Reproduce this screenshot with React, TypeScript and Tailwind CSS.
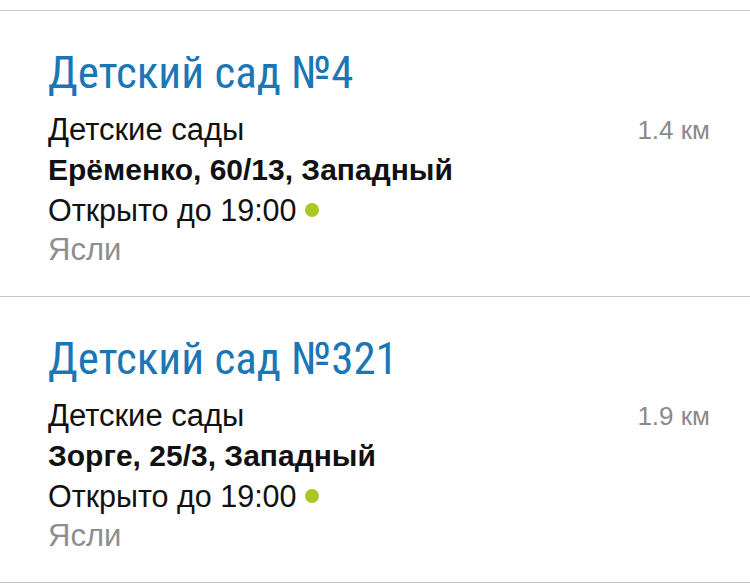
interface Place {
  id: number
  title: string
  category: string
  address: string
  hours: string
  tag: string
  distance: string
}

const places: Place[] = [
  {
    id: 4,
    title: 'Детский сад №4',
    category: 'Детские сады',
    address: 'Ерёменко, 60/13, Западный',
    hours: 'Открыто до 19:00',
    tag: 'Ясли',
    distance: '1.4 км',
  },
  {
    id: 321,
    title: 'Детский сад №321',
    category: 'Детские сады',
    address: 'Зорге, 25/3, Западный',
    hours: 'Открыто до 19:00',
    tag: 'Ясли',
    distance: '1.9 км',
  },
]

function PlaceCard({ place }: { place: Place }) {
  return (
    <li className="border-t border-[#c8c8c8] pl-[48px] pr-[40px] pt-[36px] pb-[26px]">
      {/* Title */}
      <h2 className="font-['Roboto_Condensed','DejaVu_Sans_Condensed',sans-serif] text-[45px] leading-[52px] text-[#1b76b6] mb-[11px]">
        {place.title}
      </h2>

      {/* Details */}
      <div className="text-[31px] leading-[40px] text-[#111]">
        <div className="flex items-center justify-between">
          <span>{place.category}</span>
          <span className="text-[26px] text-[#8a8a8a]">{place.distance}</span>
        </div>
        <div className="font-bold text-[30px]">{place.address}</div>
        <div className="flex items-center">
          <span className="text-[30.5px]">{place.hours}</span>
          <span className="ml-[8px] w-[14px] h-[14px] rounded-full bg-[#a9c826]" />
        </div>
        <div className="text-[#8e8e8e]">{place.tag}</div>
      </div>
    </li>
  )
}

export default function App() {
  return (
    <div className="w-[750px] h-[583px] bg-white pt-[10px] overflow-hidden font-['Liberation_Sans',Arial,sans-serif]">
      <ul className="border-b border-[#c8c8c8]">
        {places.map((p) => (
          <PlaceCard key={p.id} place={p} />
        ))}
      </ul>
    </div>
  )
}
